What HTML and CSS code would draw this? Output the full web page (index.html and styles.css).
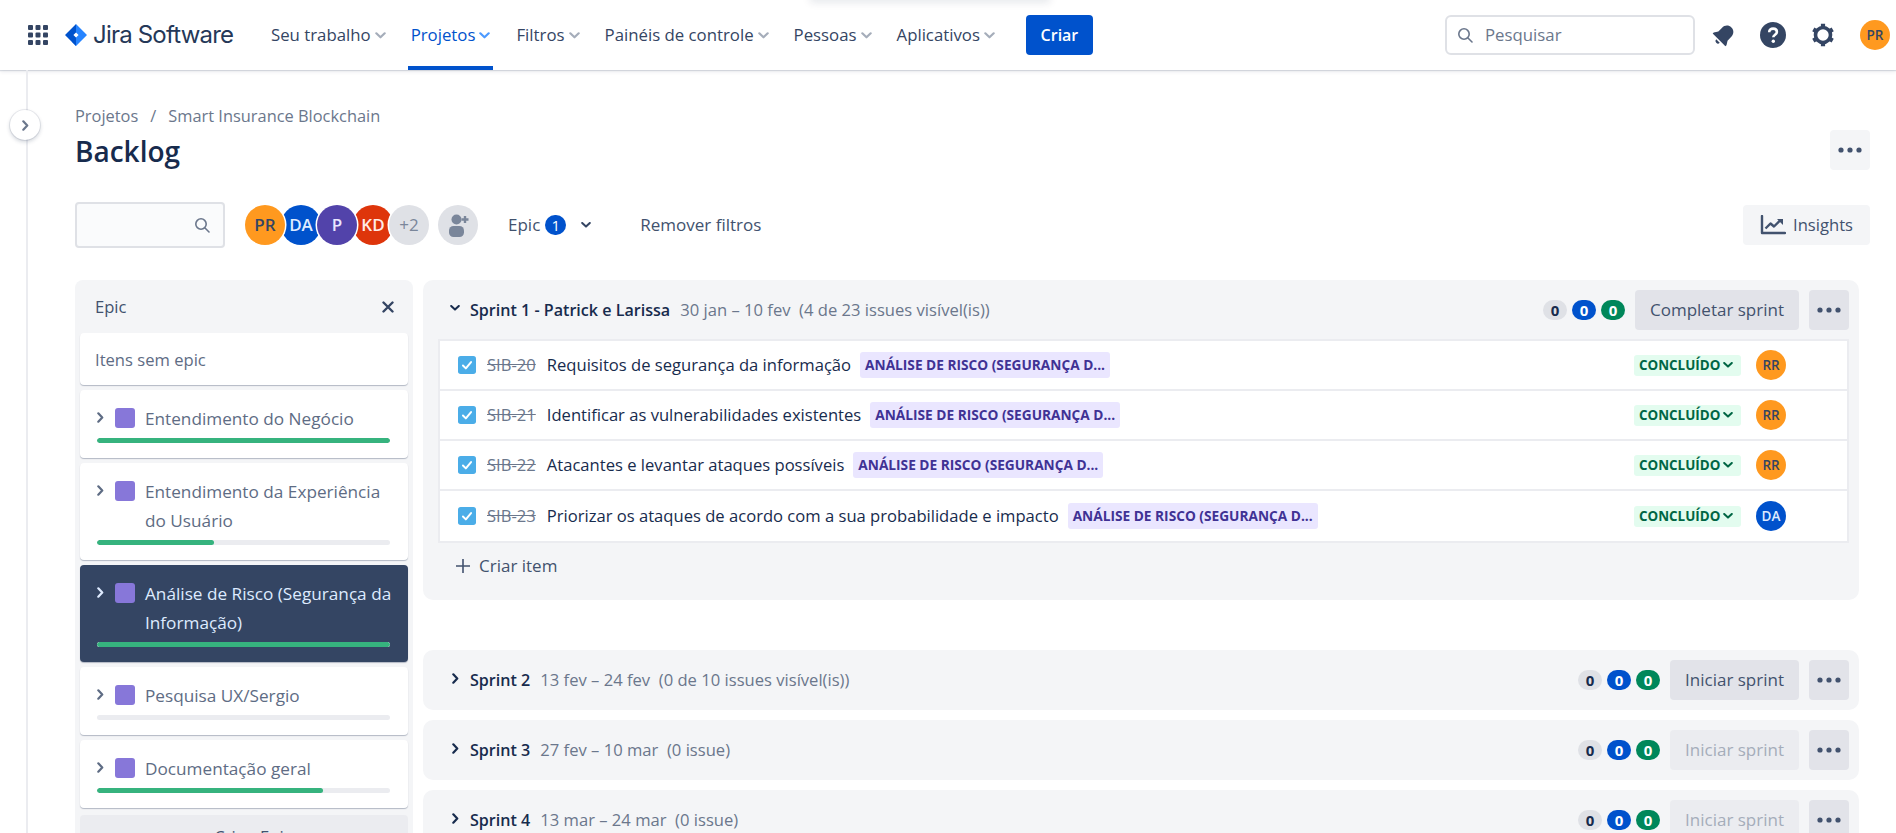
FILE: index.html
```html
<!DOCTYPE html>
<html lang="pt-BR">
<head>
    <meta charset="UTF-8">
    <title>Backlog - Smart Insurance Blockchain</title>
    <link rel="stylesheet" href="styles.css">
</head>
<body>
    <svg class="icon-defs" width="0" height="0">
        <defs>
            <symbol id="chev-down" viewBox="0 0 10 6"><path d="M1.2 1l3.8 3.6L8.8 1" fill="none" stroke="currentColor" stroke-width="2" stroke-linecap="round" stroke-linejoin="round"/></symbol>
            <symbol id="chev-right" viewBox="0 0 6 10"><path d="M1 1.2l3.6 3.8L1 8.8" fill="none" stroke="currentColor" stroke-width="2" stroke-linecap="round" stroke-linejoin="round"/></symbol>
            <symbol id="dots" viewBox="0 0 24 6"><circle cx="3" cy="3" r="2.6" fill="currentColor"/><circle cx="12" cy="3" r="2.6" fill="currentColor"/><circle cx="21" cy="3" r="2.6" fill="currentColor"/></symbol>
            <symbol id="search" viewBox="0 0 16 16"><circle cx="7" cy="7" r="5.2" fill="none" stroke="currentColor" stroke-width="1.6"/><path d="M11 11l4 4" stroke="currentColor" stroke-width="1.6" stroke-linecap="round"/></symbol>
            <symbol id="check" viewBox="0 0 20 20"><rect width="20" height="20" rx="3" fill="#4bade8"/><path d="M5.5 10.5l3.2 3.2 5.8-7" fill="none" stroke="#fff" stroke-width="2.2" stroke-linecap="round" stroke-linejoin="round"/></symbol>
        </defs>
    </svg>

    <div class="top-glow"></div>

    <header class="topbar">
        <svg class="apps" viewBox="0 0 20 20" width="20" height="20">
            <g fill="#344563">
                <rect x="0" y="0" width="5" height="5" rx="1"/><rect x="7.5" y="0" width="5" height="5" rx="1"/><rect x="15" y="0" width="5" height="5" rx="1"/>
                <rect x="0" y="7.5" width="5" height="5" rx="1"/><rect x="7.5" y="7.5" width="5" height="5" rx="1"/><rect x="15" y="7.5" width="5" height="5" rx="1"/>
                <rect x="0" y="15" width="5" height="5" rx="1"/><rect x="7.5" y="15" width="5" height="5" rx="1"/><rect x="15" y="15" width="5" height="5" rx="1"/>
            </g>
        </svg>
        <div class="logo">
            <svg viewBox="0 0 22 22" width="22" height="22">
                <path d="M11 0L22 11 11 22l-4.2-4.2L13.6 11 11 8.4z" fill="#2684ff"/>
                <path d="M11 0v8.4L8.4 11 11 13.6V22L0 11z" fill="#0052cc"/>
            </svg>
            <span class="logo-text">Jira Software</span>
        </div>
        <nav class="menu">
            <a class="menu-item">Seu trabalho<svg class="menu-chev"><use href="#chev-down"/></svg></a>
            <a class="menu-item active">Projetos<svg class="menu-chev"><use href="#chev-down"/></svg></a>
            <a class="menu-item wide">Filtros<svg class="menu-chev"><use href="#chev-down"/></svg></a>
            <a class="menu-item">Painéis de controle<svg class="menu-chev"><use href="#chev-down"/></svg></a>
            <a class="menu-item">Pessoas<svg class="menu-chev"><use href="#chev-down"/></svg></a>
            <a class="menu-item">Aplicativos<svg class="menu-chev"><use href="#chev-down"/></svg></a>
        </nav>
        <button class="create">Criar</button>
        <div class="top-right">
            <div class="top-search">
                <svg width="16" height="16"><use href="#search"/></svg>
                <span>Pesquisar</span>
            </div>
            <svg class="bell" viewBox="0 0 24 24" width="24" height="24">
                <g transform="rotate(45 12 12)" fill="#344563">
                    <path d="M12 1.5c-4 0-6.5 3-6.5 7v5L3 17.5V19h18v-1.5l-2.5-4v-5c0-4-2.5-7-6.5-7z"/>
                    <path d="M9.5 20.5h5a2.5 2.5 0 0 1-5 0z"/>
                </g>
            </svg>
            <svg class="help" viewBox="0 0 26 26" width="26" height="26">
                <circle cx="13" cy="13" r="13" fill="#344563"/>
                <path d="M9.2 10.2c0-2.2 1.7-3.6 3.9-3.6s3.8 1.3 3.8 3.3c0 2.8-3.6 2.8-3.6 5.4" fill="none" stroke="#fff" stroke-width="2.6"/>
                <circle cx="13.3" cy="19.3" r="1.7" fill="#fff"/>
            </svg>
            <svg class="gear" viewBox="0 0 24 24" width="24" height="24">
                <circle cx="12" cy="12" r="7.5" fill="none" stroke="#344563" stroke-width="3.6"/>
                <path d="M12 0.8v3.5M12 19.7v3.5M2.3 6.4l3 1.75M18.7 15.85l3 1.75M2.3 17.6l3-1.75M18.7 8.15l3-1.75" stroke="#344563" stroke-width="4.2"/>
            </svg>
            <div class="avatar small orange">PR</div>
        </div>
    </header>

    <div class="page">
        <aside class="rail">
            <button class="rail-toggle"><svg width="7" height="11"><use href="#chev-right"/></svg></button>
        </aside>

        <main class="content">
            <div class="crumbs"><span>Projetos</span><span class="crumb-sep">/</span><span>Smart Insurance Blockchain</span></div>
            <div class="title-row">
                <h1>Backlog</h1>
                <button class="square-btn light"><svg width="24" height="6"><use href="#dots"/></svg></button>
            </div>

            <div class="filters">
                <div class="filter-search"><svg width="16" height="16"><use href="#search"/></svg></div>
                <div class="people">
                    <div class="avatar orange front">PR</div>
                    <div class="avatar blue">DA</div>
                    <div class="avatar purple front">P</div>
                    <div class="avatar red">KD</div>
                    <div class="avatar grey front">+2</div>
                </div>
                <div class="add-person">
                    <svg viewBox="0 0 24 24" width="24" height="24">
                        <circle cx="10.5" cy="6.5" r="5" fill="#7a869a"/>
                        <rect x="3" y="13" width="15" height="11" rx="4.5" fill="#7a869a"/>
                        <path d="M19 3v7M15.5 6.5h7" stroke="#7a869a" stroke-width="2.4"/>
                    </svg>
                </div>
                <div class="epic-filter">Epic<span class="count-one">1</span><svg class="epic-chev"><use href="#chev-down"/></svg></div>
                <div class="clear-filters">Remover filtros</div>
                <button class="insights">
                    <svg viewBox="0 0 26 20" width="26" height="20">
                        <path d="M2 1v17h23" fill="none" stroke="#42526e" stroke-width="2.4" stroke-linecap="round" stroke-linejoin="round"/>
                        <path d="M5.5 13.5l5-5 3.5 3 6.5-6.5" fill="none" stroke="#42526e" stroke-width="2.4" stroke-linejoin="round"/>
                        <path d="M17 4h6v6z" fill="#42526e"/>
                    </svg>
                    Insights
                </button>
            </div>

            <div class="board">
                <section class="epics">
                    <div class="epics-head">
                        <span>Epic</span>
                        <svg viewBox="0 0 12 12" width="12" height="12"><path d="M1.5 1.5l9 9M10.500 1.500l-9 9" stroke="#344563" stroke-width="2.4" stroke-linecap="round"/></svg>
                    </div>
                    <div class="epic-card no-epic">Itens sem epic</div>
                    <div class="epic-card">
                        <div class="epic-row"><svg class="epic-arrow"><use href="#chev-right"/></svg><i class="epic-square"></i><span>Entendimento do Negócio</span></div>
                        <div class="progress"><div class="progress-fill" style="width: 100%"></div></div>
                    </div>
                    <div class="epic-card">
                        <div class="epic-row"><svg class="epic-arrow"><use href="#chev-right"/></svg><i class="epic-square"></i><span>Entendimento da Experiência do Usuário</span></div>
                        <div class="progress"><div class="progress-fill" style="width: 40%"></div></div>
                    </div>
                    <div class="epic-card selected">
                        <div class="epic-row"><svg class="epic-arrow"><use href="#chev-right"/></svg><i class="epic-square"></i><span>Análise de Risco (Segurança da Informação)</span></div>
                        <div class="progress"><div class="progress-fill" style="width: 100%"></div></div>
                    </div>
                    <div class="epic-card">
                        <div class="epic-row"><svg class="epic-arrow"><use href="#chev-right"/></svg><i class="epic-square"></i><span>Pesquisa UX/Sergio</span></div>
                        <div class="progress"></div>
                    </div>
                    <div class="epic-card">
                        <div class="epic-row"><svg class="epic-arrow"><use href="#chev-right"/></svg><i class="epic-square"></i><span>Documentação geral</span></div>
                        <div class="progress"><div class="progress-fill" style="width: 77%"></div></div>
                    </div>
                    <div class="create-epic">+ Criar Epic</div>
                </section>

                <section class="sprints">
                    <div class="sprint open">
                        <div class="sprint-head">
                            <svg class="sprint-arrow down"><use href="#chev-down"/></svg>
                            <strong>Sprint 1 - Patrick e Larissa</strong>
                            <span class="sprint-meta">30 jan – 10 fev&nbsp; (4 de 23 issues visível(is))</span>
                            <div class="points"><b class="pt grey-pt">0</b><b class="pt blue-pt">0</b><b class="pt green-pt">0</b></div>
                            <button class="sprint-btn">Completar sprint</button>
                            <button class="square-btn"><svg width="24" height="6"><use href="#dots"/></svg></button>
                        </div>
                        <div class="issues">
                            <div class="issue">
                                <svg class="issue-check"><use href="#check"/></svg>
                                <span class="issue-key">SIB-20</span>
                                <span class="issue-title">Requisitos de segurança da informação</span>
                                <span class="epic-tag">ANÁLISE DE RISCO (SEGURANÇA D...</span>
                                <span class="status">CONCLUÍDO<svg class="status-chev"><use href="#chev-down"/></svg></span>
                                <div class="avatar small orange">RR</div>
                            </div>
                            <div class="issue">
                                <svg class="issue-check"><use href="#check"/></svg>
                                <span class="issue-key">SIB-21</span>
                                <span class="issue-title">Identificar as vulnerabilidades existentes</span>
                                <span class="epic-tag">ANÁLISE DE RISCO (SEGURANÇA D...</span>
                                <span class="status">CONCLUÍDO<svg class="status-chev"><use href="#chev-down"/></svg></span>
                                <div class="avatar small orange">RR</div>
                            </div>
                            <div class="issue">
                                <svg class="issue-check"><use href="#check"/></svg>
                                <span class="issue-key">SIB-22</span>
                                <span class="issue-title">Atacantes e levantar ataques possíveis</span>
                                <span class="epic-tag">ANÁLISE DE RISCO (SEGURANÇA D...</span>
                                <span class="status">CONCLUÍDO<svg class="status-chev"><use href="#chev-down"/></svg></span>
                                <div class="avatar small orange">RR</div>
                            </div>
                            <div class="issue">
                                <svg class="issue-check"><use href="#check"/></svg>
                                <span class="issue-key">SIB-23</span>
                                <span class="issue-title">Priorizar os ataques de acordo com a sua probabilidade e impacto</span>
                                <span class="epic-tag">ANÁLISE DE RISCO (SEGURANÇA D...</span>
                                <span class="status">CONCLUÍDO<svg class="status-chev"><use href="#chev-down"/></svg></span>
                                <div class="avatar small blue">DA</div>
                            </div>
                        </div>
                        <div class="create-issue">
                            <svg viewBox="0 0 14 14" width="14" height="14"><path d="M7 0v14M0 7h14" stroke="#42526e" stroke-width="1.6"/></svg>
                            Criar item
                        </div>
                    </div>

                    <div class="sprint">
                        <div class="sprint-head">
                            <svg class="sprint-arrow"><use href="#chev-right"/></svg>
                            <strong>Sprint 2</strong>
                            <span class="sprint-meta">13 fev – 24 fev&nbsp; (0 de 10 issues visível(is))</span>
                            <div class="points"><b class="pt grey-pt">0</b><b class="pt blue-pt">0</b><b class="pt green-pt">0</b></div>
                            <button class="sprint-btn">Iniciar sprint</button>
                            <button class="square-btn"><svg width="24" height="6"><use href="#dots"/></svg></button>
                        </div>
                    </div>
                    <div class="sprint">
                        <div class="sprint-head">
                            <svg class="sprint-arrow"><use href="#chev-right"/></svg>
                            <strong>Sprint 3</strong>
                            <span class="sprint-meta">27 fev – 10 mar&nbsp; (0 issue)</span>
                            <div class="points"><b class="pt grey-pt">0</b><b class="pt blue-pt">0</b><b class="pt green-pt">0</b></div>
                            <button class="sprint-btn off">Iniciar sprint</button>
                            <button class="square-btn"><svg width="24" height="6"><use href="#dots"/></svg></button>
                        </div>
                    </div>
                    <div class="sprint">
                        <div class="sprint-head">
                            <svg class="sprint-arrow"><use href="#chev-right"/></svg>
                            <strong>Sprint 4</strong>
                            <span class="sprint-meta">13 mar – 24 mar&nbsp; (0 issue)</span>
                            <div class="points"><b class="pt grey-pt">0</b><b class="pt blue-pt">0</b><b class="pt green-pt">0</b></div>
                            <button class="sprint-btn off">Iniciar sprint</button>
                            <button class="square-btn"><svg width="24" height="6"><use href="#dots"/></svg></button>
                        </div>
                    </div>
                </section>
            </div>
        </main>
    </div>
</body>
</html>
```

FILE: styles.css
```css
* {
    box-sizing: border-box;
}
html, body {
    height: 100%;
}
body {
    margin: 0;
    height: 833px;
    overflow: hidden;
    background: white;
    color: #42526e;
    font: 16.6px/20px "Open Sans", "Noto Sans", sans-serif;
}
button {
    font: inherit;
    border: none;
    cursor: pointer;
}
.icon-defs {
    position: absolute;
}
.top-glow {
    position: absolute;
    top: -8px;
    left: 810px;
    width: 240px;
    height: 8px;
    box-shadow: 0 2px 8px rgba(9, 30, 66, 0.12);
}

/* top bar */
.topbar {
    height: 70px;
    display: flex;
    align-items: center;
    padding: 0 6px 0 28px;
    box-shadow: 0 1px 1px rgba(9, 30, 66, 0.13), 0 2px 4px rgba(9, 30, 66, 0.08);
    position: relative;
}
.apps {
    flex: none;
}
.logo {
    display: flex;
    align-items: center;
    margin-left: 17px;
    width: 203px;
}
.logo-text {
    margin-left: 6px;
    font: 400 24px/26px "Inter", sans-serif;
    letter-spacing: -0.8px;
    color: #253858;
}
.menu {
    display: flex;
    height: 70px;
}
.menu-item {
    display: flex;
    align-items: center;
    padding: 0 3px;
    margin-right: 19px;
    color: #344563;
    font-size: 16.8px;
    position: relative;
    white-space: nowrap;
}
.menu-item.active {
    margin-right: 20px;
}
.menu-chev {
    width: 11px;
    height: 7px;
    margin-left: 4px;
    color: #a5adba;
}
.menu-item.active {
    color: #0052cc;
}
.menu-item.active .menu-chev {
    color: #4c9aff;
}
.menu-item.active::after {
    content: "";
    position: absolute;
    left: 0;
    right: 0;
    bottom: 0;
    height: 4px;
    background: #0052cc;
}
.create {
    width: 67px;
    height: 40px;
    margin-left: 9px;
    background: #0052cc;
    color: white;
    border-radius: 4px;
    font-weight: 600;
    font-size: 16px;
}
.top-right {
    margin-left: auto;
    display: flex;
    align-items: center;
}
.top-search {
    width: 250px;
    height: 40px;
    border: 2px solid #dfe1e6;
    border-radius: 6px;
    display: flex;
    align-items: center;
    padding-left: 10px;
    color: #6b778c;
}
.top-search span {
    margin-left: 12px;
    font-size: 16.8px;
}
.bell {
    margin-left: 17px;
}
.help {
    margin-left: 24px;
}
.gear {
    margin-left: 25px;
}
.top-right .avatar {
    margin-left: 25px;
}

/* avatars */
.avatar {
    width: 40px;
    height: 40px;
    flex: none;
    border-radius: 50%;
    display: flex;
    align-items: center;
    justify-content: center;
    font-weight: 600;
    font-size: 17px;
    color: white;
}
.avatar.small {
    width: 30px;
    height: 30px;
    font-size: 13.5px;
}
.orange {
    background: #ff991f;
    color: #344563;
}
.blue {
    background: #0052cc;
    color: #deebff;
}
.purple {
    background: #5243aa;
    color: #eae6ff;
}
.red {
    background: #de350b;
    color: #ffebe6;
}
.grey {
    background: #dfe1e6;
    color: #7a869a;
}
.avatar.grey {
    font-weight: 400;
}

/* page */
.page {
    display: flex;
}
.rail {
    width: 75px;
    flex: none;
    height: 763px;
    position: relative;
}
.rail::before {
    content: "";
    position: absolute;
    left: 26px;
    top: 0;
    bottom: 0;
    width: 2px;
    background: #ebecf0;
}
.rail-toggle {
    position: absolute;
    left: 10px;
    top: 40px;
    width: 30px;
    height: 30px;
    padding: 0;
    border-radius: 50%;
    background: white;
    color: #6b778c;
    box-shadow: 0 0 0 1px rgba(9, 30, 66, 0.08), 0 2px 4px rgba(9, 30, 66, 0.2);
    display: flex;
    align-items: center;
    justify-content: center;
}
.content {
    width: 1795px;
    flex: none;
}
.crumbs {
    margin-top: 36px;
    height: 20px;
    color: #6b778c;
    font-size: 16.4px;
}
.crumb-sep {
    margin: 0 12px;
}
.title-row {
    height: 40px;
    margin-top: 4px;
    display: flex;
    align-items: center;
    justify-content: space-between;
}
h1 {
    margin: 2px 0 0;
    font-size: 28px;
    line-height: 40px;
    font-weight: 600;
    color: #172b4d;
}
.square-btn {
    width: 40px;
    height: 40px;
    padding: 0;
    flex: none;
    border-radius: 4px;
    background: #e2e3e9;
    color: #42526e;
    display: flex;
    align-items: center;
    justify-content: center;
}
.square-btn.light {
    background: #f4f5f7;
}

/* filters */
.filters {
    margin-top: 32px;
    height: 46px;
    display: flex;
    align-items: center;
}
.filter-search {
    width: 150px;
    height: 46px;
    border: 2px solid #dfe1e6;
    border-radius: 4px;
    background: #fafbfc;
    display: flex;
    align-items: center;
    justify-content: flex-end;
    padding-right: 13px;
    color: #6b778c;
}
.people {
    display: flex;
    margin-left: 20px;
}
.people .avatar {
    margin-right: -4px;
    position: relative;
}
.people .front {
    z-index: 1;
    box-shadow: 0 0 0 1.5px white;
}
.add-person {
    width: 40px;
    height: 40px;
    margin-left: 13px;
    border-radius: 50%;
    background: #dfe1e6;
    display: flex;
    align-items: center;
    justify-content: center;
}
.epic-filter {
    display: flex;
    align-items: center;
    margin-left: 30px;
    color: #42526e;
    font-size: 17px;
}
.count-one {
    width: 21px;
    height: 20px;
    margin-left: 5px;
    border-radius: 10px;
    background: #0052cc;
    color: white;
    font-size: 15px;
    text-align: center;
}
.epic-chev {
    width: 10px;
    height: 6px;
    margin-left: 15px;
    color: #344563;
}
.clear-filters {
    margin-left: 49px;
    color: #42526e;
    font-size: 17px;
}
.insights {
    margin-left: auto;
    width: 127px;
    height: 40px;
    border-radius: 4px;
    background: #f4f5f7;
    color: #42526e;
    display: flex;
    align-items: center;
    justify-content: center;
    gap: 7px;
    padding: 0;
}

/* board */
.board {
    margin-top: 32px;
    display: flex;
    gap: 10px;
}
.epics {
    width: 338px;
    flex: none;
    height: 560px;
    padding: 0 5px;
    border-radius: 8px 8px 0 0;
    background: #f4f5f7;
}
.epics-head {
    height: 53px;
    display: flex;
    align-items: center;
    justify-content: space-between;
    padding: 0 14px 0 15px;
    color: #42526e;
}
.epic-card {
    background: white;
    border-radius: 4px;
    box-shadow: 0 1px 1px rgba(9, 30, 66, 0.28);
    margin-bottom: 5px;
    padding: 14px 18px 15px 17px;
    color: #5e6c84;
    overflow: hidden;
}
.no-epic {
    height: 52px;
    padding: 17px 15px;
}
.epic-row {
    display: flex;
    align-items: flex-start;
    font-size: 17.2px;
    line-height: 29px;
    color: #5e6c84;
    margin-right: -10px;
}
.epic-arrow {
    width: 7px;
    height: 11px;
    margin-top: 8px;
    flex: none;
    color: #5e6c84;
}
.epic-square {
    width: 20px;
    height: 20px;
    margin: 4px 10px 0 11px;
    flex: none;
    border-radius: 3px;
    background: #8777d9;
}
.progress {
    height: 5px;
    margin-top: 5px;
    border-radius: 3px;
    background: #ebecf0;
    overflow: hidden;
}
.progress-fill {
    height: 5px;
    border-radius: 3px;
    background: #36b37e;
}
.selected {
    background: #344563;
}
.selected .epic-row,
.selected .epic-arrow {
    color: #deebff;
}
.create-epic {
    margin-top: 7px;
    height: 44px;
    border-radius: 4px;
    background: #ebecf0;
    text-align: center;
    line-height: 44px;
    word-spacing: 4px;
}

/* sprints */
.sprints {
    width: 1436px;
    flex: none;
}
.sprint {
    background: #f4f5f7;
    border-radius: 10px;
    margin-bottom: 10px;
    padding: 0 10px 0 15px;
}
.sprint.open {
    height: 320px;
    margin-bottom: 50px;
}
.sprint-head {
    height: 60px;
    display: flex;
    align-items: center;
    color: #172b4d;
}
.sprint-arrow {
    width: 7px;
    height: 11px;
    margin: -4px 11px 0 14px;
    flex: none;
    color: #172b4d;
}
.sprint-arrow.down {
    width: 10px;
    height: 6px;
    margin-left: 12px;
    margin-right: 10px;
}
.sprint-head strong {
    font-size: 16.1px;
    font-weight: 600;
}
.sprint-meta {
    margin-left: 10px;
    color: #6b778c;
}
.points {
    margin-left: auto;
    display: flex;
    gap: 5px;
}
.pt {
    min-width: 24px;
    height: 20px;
    border-radius: 10px;
    font-size: 15px;
    line-height: 20px;
    font-weight: 700;
    text-align: center;
}
.grey-pt {
    background: #dfe1e6;
    color: #172b4d;
}
.blue-pt {
    background: #0052cc;
    color: white;
}
.green-pt {
    background: #00875a;
    color: white;
}
.sprint-btn {
    height: 40px;
    margin: 0 10px;
    padding: 0 15px;
    border-radius: 4px;
    background: #e2e3e9;
    color: #42526e;
    font-size: 17px;
}
.sprint-btn.off {
    background: #ebecf0;
    color: #a5adba;
}

/* issues */
.issues {
    margin-top: -1px;
    border: 2px solid #ebecf0;
    background: white;
}
.issue {
    height: 50px;
    display: flex;
    align-items: center;
    padding: 0 61px 0 18px;
    border-bottom: 2px solid #ebecf0;
}
.issue:last-child {
    border-bottom: none;
}
.issue-check {
    width: 18px;
    height: 18px;
    flex: none;
}
.issue-key {
    margin-left: 11px;
    color: #6b778c;
    text-decoration: line-through;
}
.issue-title {
    margin-left: 11px;
    color: #172b4d;
}
.epic-tag {
    margin-left: 9px;
    height: 26px;
    padding: 0 5px;
    border-radius: 3px;
    background: #eae6ff;
    color: #403294;
    font-size: 13.7px;
    line-height: 26px;
    font-weight: 700;
    white-space: nowrap;
}
.status {
    margin-left: auto;
    height: 21px;
    width: 107px;
    border-radius: 3px;
    background: #e3fcef;
    color: #006644;
    font-size: 13.4px;
    line-height: 21px;
    font-weight: 700;
    display: flex;
    align-items: center;
    padding-left: 5px;
}
.status-chev {
    width: 10px;
    height: 6px;
    margin-left: 3px;
}
.issue .avatar {
    margin-left: 15px;
}
.create-issue {
    margin-top: 3px;
    height: 40px;
    padding-left: 18px;
    display: flex;
    align-items: center;
    gap: 9px;
    color: #42526e;
    font-size: 17px;
}
```
